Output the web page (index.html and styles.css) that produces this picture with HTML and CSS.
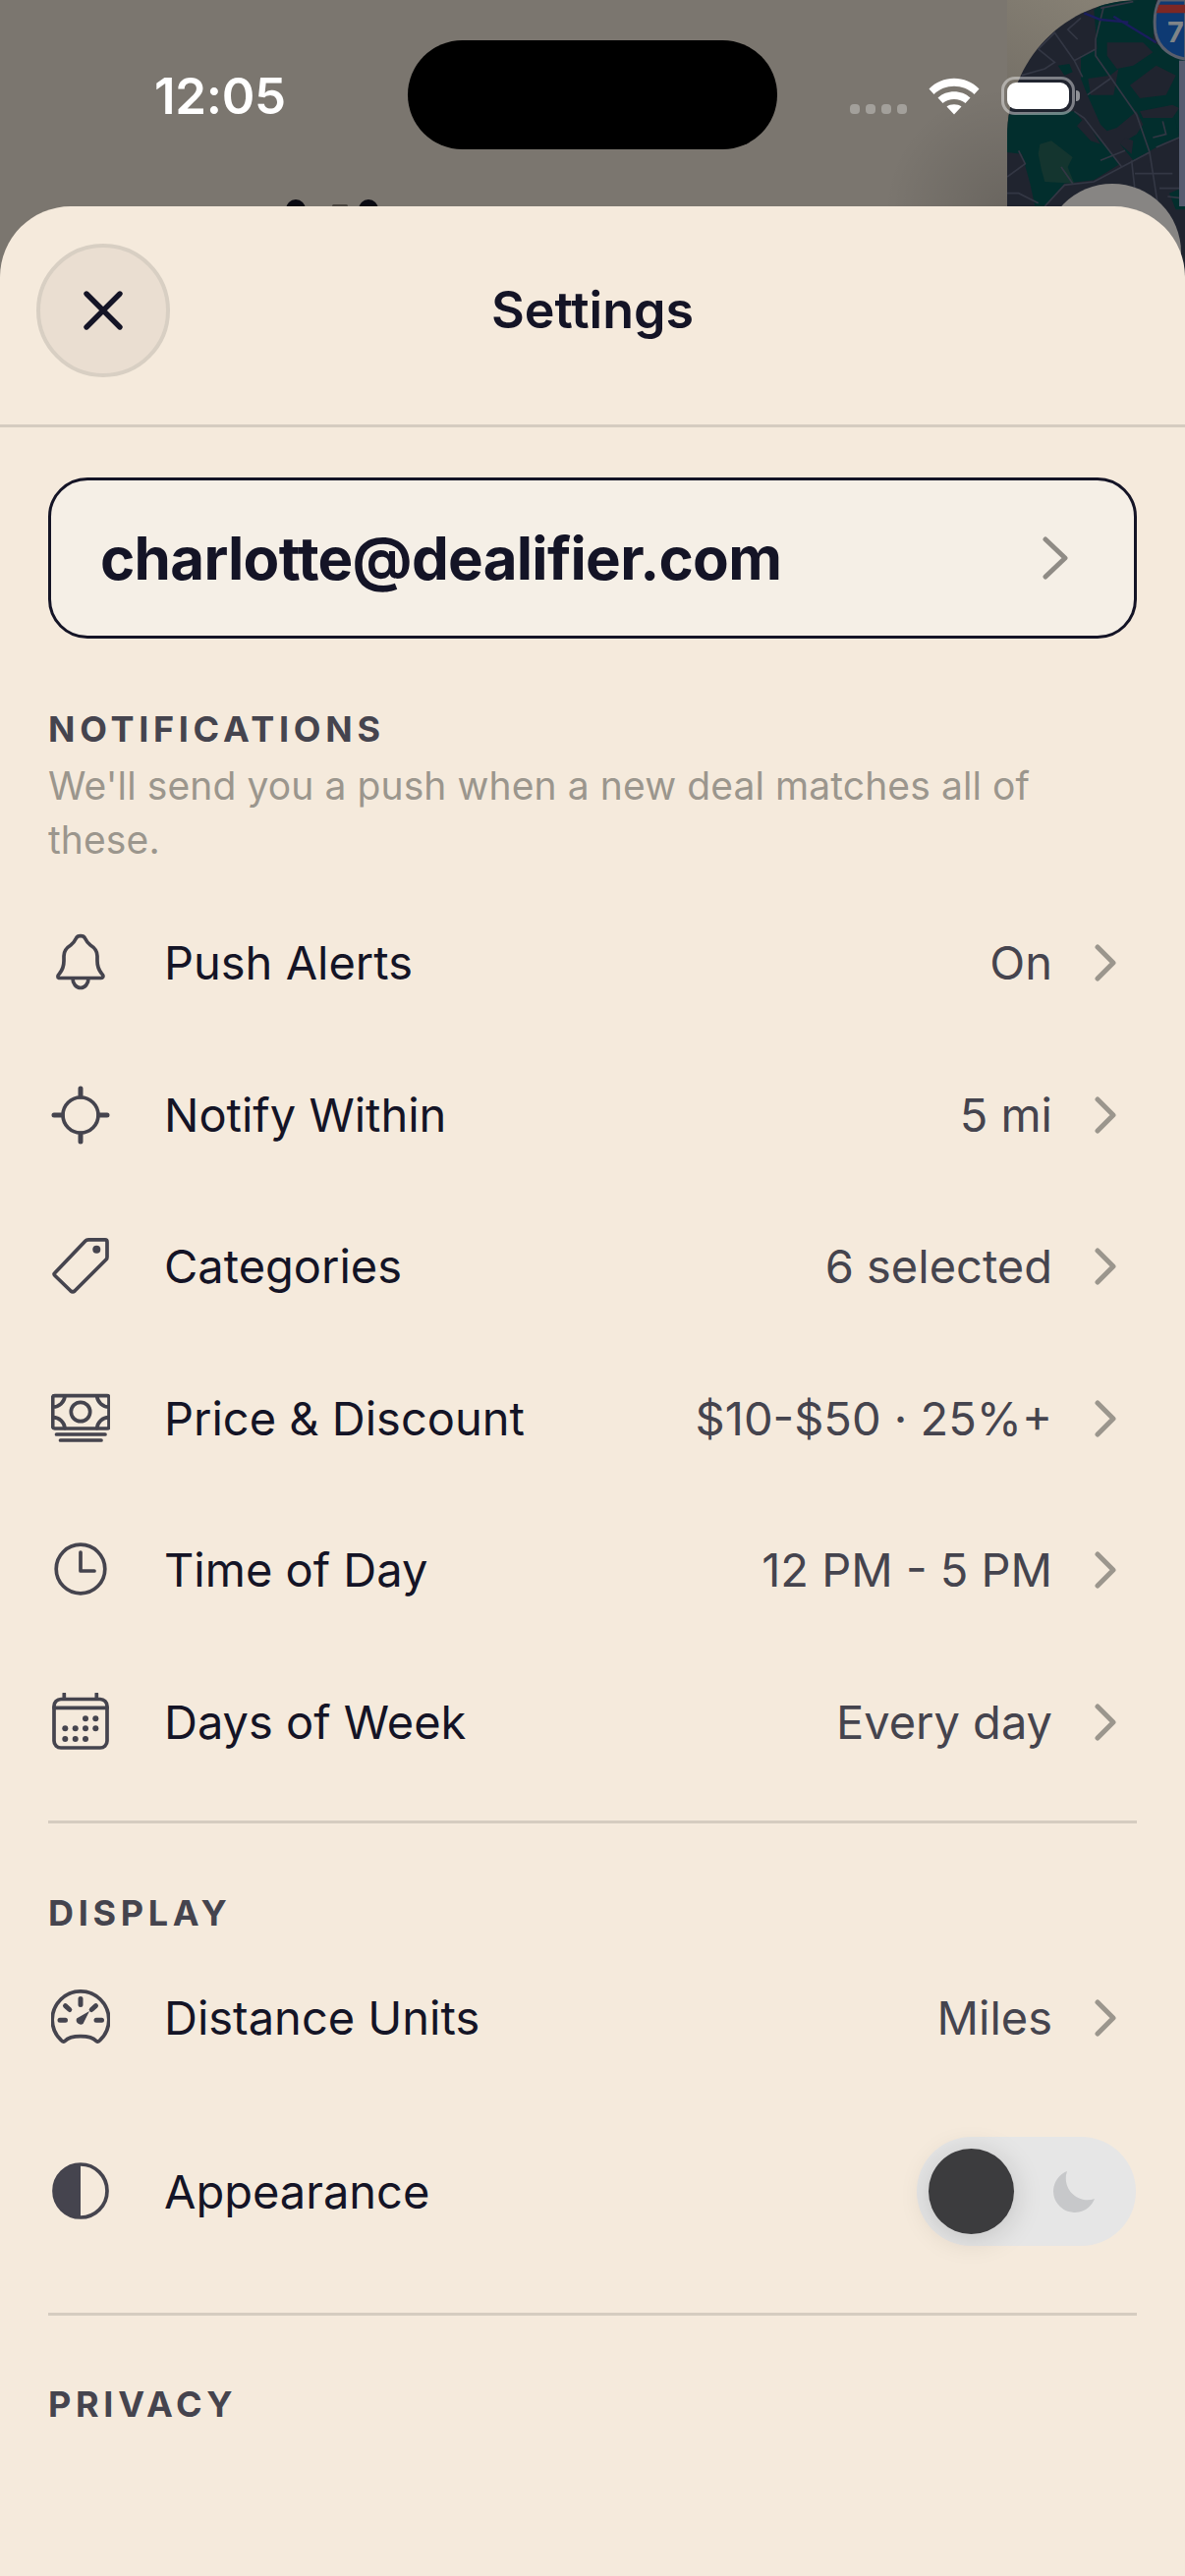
FILE: index.html
```html
<!DOCTYPE html>
<html lang="en">
<head>
<meta charset="utf-8">
<title>Settings</title>
<link rel="stylesheet" href="styles.css">
</head>
<body>
<div class="phone">
  <div class="backdrop" aria-hidden="true">
    <svg class="backdrop-art" width="1206" height="280" viewBox="0 0 1206 280">
      <defs>
        <radialGradient id="shade" gradientUnits="userSpaceOnUse" cx="1025" cy="215" r="125">
          <stop offset="0" stop-color="#000" stop-opacity=".14"/>
          <stop offset="1" stop-color="#000" stop-opacity="0"/>
        </radialGradient>
        <linearGradient id="corner" gradientUnits="userSpaceOnUse" x1="1110" y1="0" x2="1025" y2="150">
          <stop offset="0" stop-color="#868074"/>
          <stop offset="1" stop-color="#6f6a62"/>
        </linearGradient>
        <clipPath id="mapclip"><path d="M1025 280 V140 C1025 60 1085 0 1160 0 H1206 V280Z"/></clipPath>
      </defs>
      <rect x="900" y="90" width="125" height="125" fill="url(#shade)"/>
      <rect x="1025" y="0" width="140" height="150" fill="url(#corner)"/>
      <circle cx="301" cy="213" r="10" fill="#0a0a12"/>
      <circle cx="375" cy="213" r="10" fill="#0a0a12"/>
      <rect x="338" y="208" width="16" height="3" rx="1.5" fill="#4a4640"/>
      <g clip-path="url(#mapclip)">
        <rect x="1025" y="0" width="181" height="280" fill="#20242f"/>
        <g transform="translate(1020 0) scale(.33333)">
          <g fill="#022e2d">
            <path d="M15 350 L220 340 L300 430 L360 500 L280 550 L190 560 L130 630 L100 630 L85 560 L60 470 L15 465Z"/>
            <path d="M240 170 L290 150 L280 30 L310 10 L400 0 L470 0 L460 130 L558 170 V400 L470 450 L400 490 L360 440 L410 410 L430 380 L410 340 L350 390 L320 400 L300 380 L260 290 L240 240Z"/>
            <path d="M170 200 L205 195 L215 220 L190 230Z"/>
            <path d="M480 360 L525 350 L540 420 L480 440Z"/>
            <path d="M510 590 L558 570 V640 L530 640Z"/>
          </g>
          <g fill="#20242f">
            <path d="M390 260 L470 200 L530 230 L500 290 L420 300Z"/>
            <path d="M320 130 L430 130 L460 160 L400 200 L350 210 L320 170Z"/>
            <path d="M420 340 L520 320 L540 330 L520 360 L430 360Z"/>
            <path d="M262 240 L330 230 L355 210 L340 290 L270 290Z"/>
            <path d="M228 385 L250 360 L300 440 L270 430Z"/>
            <path d="M360 440 L375 420 L400 430 L395 470Z"/>
          </g>
          <path d="M115 440 L150 430 L215 480 L200 510 L220 560 L130 555 L120 520 L110 470Z" fill="#14352f"/>
          <g fill="none" stroke="#333744" stroke-width="5">
            <path d="M310 20 L285 120 L285 170 L330 235 L410 350 L450 465 L475 625"/>
            <path d="M450 465 L365 510 L280 555 L190 565 L130 630"/>
            <path d="M220 340 L250 360 L365 510 M260 290 L330 240 M395 490 L410 625 M405 530 L520 530 M470 450 L540 420"/>
            <path d="M285 150 L220 185 L160 100 L110 150 L160 190 L130 210 L60 230 M220 185 L245 235 M240 55 L200 90 L230 120"/>
            <path d="M15 540 L70 500 L50 460 M15 590 L50 590 L110 620 M490 370 L500 410 L460 420 M505 600 L545 605 M480 575 L545 575 M300 490 L375 460 M180 510 L215 560"/>
            <path d="M300 25 L400 5"/>
          </g>
          <path d="M250 40 L300 60 L385 68 M340 50 L470 130" fill="none" stroke="#1a1d5e" stroke-width="7"/>
          <rect x="540" y="185" width="18" height="445" fill="#565c70"/>
          <path d="M480 0 C465 30 462 60 468 100 C478 150 520 175 560 180 V0Z" fill="#0e3a73" stroke="#5a5f6c" stroke-width="9"/>
          <path d="M478 14 H558 V40 H470Z" fill="#7d2724"/>
        </g>
        <text class="shield-num" x="1188" y="43">7</text>
        <circle cx="1132" cy="257" r="70" fill="#878583"/>
      </g>
    </svg>
  </div>

  <header class="status-bar">
    <span class="clock">12:05</span>
    <span class="island"></span>
    <div class="status-right">
      <span class="signal"><i></i><i></i><i></i><i></i></span>
      <svg class="wifi" width="52" height="38" viewBox="0 0 52 38">
        <path d="M0.5 11.5 C14 -3 38 -3 51.5 11.5 L46.5 17 C35.5 6 16.5 6 5.5 17Z M9.5 20.5 C18 12 34 12 42.5 20.5 L37.5 26 C31 20.5 21 20.5 14.5 26Z M18.5 29.5 C22 26.5 30 26.5 33.5 29.5 L26 37.5Z" fill="#fff"/>
      </svg>
      <span class="battery"><span class="battery-fill"></span></span>
    </div>
  </header>

  <main class="sheet">
    <div class="sheet-head">
      <button class="close" type="button" aria-label="Close">
        <svg width="44" height="44" viewBox="0 0 44 44"><path d="M5 5 L39 39 M39 5 L5 39" fill="none" stroke="#141426" stroke-width="5.4" stroke-linecap="round"/></svg>
      </button>
      <h1 class="title">Settings</h1>
    </div>

    <div class="content">
      <a class="account">
        <span class="account-email">charlotte@dealifier.com</span>
        <svg class="chev-account" width="26" height="44" viewBox="0 0 26 44"><path d="M3 3 L23 22 L3 41" fill="none" stroke="#8f8b85" stroke-width="5" stroke-linecap="round" stroke-linejoin="round"/></svg>
      </a>

      <section class="group group-notify">
        <h2 class="label">NOTIFICATIONS</h2>
        <p class="hint">We'll send you a push when a new deal matches all of these.</p>
        <ul class="rows">
          <li class="row">
            <svg class="ico" viewBox="0 0 60 60"><path d="M8 45.5 Q5.5 44 8.5 41 C11 38 13 35 13 28 L13 23 C13 17 16 14.5 20 12 C23 10 24 8 25.5 5 C27 1.8 33 1.8 34.5 5 C36 8 37 10 40 12 C44 14.5 47 17 47 23 L47 28 C47 35 49 38 51.5 41 C54.5 44 52 45.5 51 45.5Z M22 46 A8 9.5 0 0 0 38 46"/></svg>
            <span class="name">Push Alerts</span><span class="val">On</span>
            <svg class="chev" viewBox="0 0 22 38"><path d="M3 3 L19 19 L3 35"/></svg>
          </li>
          <li class="row">
            <svg class="ico" viewBox="0 0 60 60"><circle cx="30" cy="30" r="18"/><path class="thick" d="M30 3 V11 M30 49 V57 M3 30 H11 M49 30 H57"/></svg>
            <span class="name">Notify Within</span><span class="val">5 mi</span>
            <svg class="chev" viewBox="0 0 22 38"><path d="M3 3 L19 19 L3 35"/></svg>
          </li>
          <li class="row">
            <svg class="ico" viewBox="0 0 60 60"><path d="M3.5 37 L35 4 Q36 2.8 38 2.8 H55 Q57 2.8 57 5 V20.5 Q57 22 56 23 L24 55 Q22 56.8 20 55 L4 39.5 Q2.5 38 3.5 37Z"/><circle class="dot" cx="46.3" cy="12.7" r="4"/></svg>
            <span class="name">Categories</span><span class="val">6 selected</span>
            <svg class="chev" viewBox="0 0 22 38"><path d="M3 3 L19 19 L3 35"/></svg>
          </li>
          <li class="row">
            <svg class="ico" viewBox="0 0 60 60"><rect x="1.7" y="6.7" width="57.3" height="33.3" rx="2"/><circle cx="30" cy="23" r="9.7"/><path d="M14 7 A12 12 0 0 1 2 18 M46.7 7 A12 12 0 0 0 58.7 18 M14 39.7 A12 12 0 0 0 2 28.7 M46.7 39.7 A12 12 0 0 1 58.7 28.7 M5.5 46 H55 M9.5 52 H51"/></svg>
            <span class="name">Price &amp; Discount</span><span class="val">$10-$50 · 25%+</span>
            <svg class="chev" viewBox="0 0 22 38"><path d="M3 3 L19 19 L3 35"/></svg>
          </li>
          <li class="row">
            <svg class="ico" viewBox="0 0 60 60"><circle cx="30" cy="29" r="24.8"/><path d="M30 12 V31 H44"/></svg>
            <span class="name">Time of Day</span><span class="val">12 PM - 5 PM</span>
            <svg class="chev" viewBox="0 0 22 38"><path d="M3 3 L19 19 L3 35"/></svg>
          </li>
          <li class="row">
            <svg class="ico" viewBox="0 0 60 60"><rect x="3" y="6.5" width="54" height="49.5" rx="7"/><path d="M3 15.3 H57 M13.3 1 V6 M46.3 1 V6"/><g class="dots"><circle cx="35" cy="26.3" r="3"/><circle cx="45.3" cy="26.3" r="3"/><circle cx="14.3" cy="36.3" r="3"/><circle cx="24.7" cy="36.3" r="3"/><circle cx="35" cy="36.3" r="3"/><circle cx="45.3" cy="36.3" r="3"/><circle cx="14.3" cy="47" r="3"/><circle cx="24.7" cy="47" r="3"/><circle cx="35" cy="47" r="3"/></g></svg>
            <span class="name">Days of Week</span><span class="val">Every day</span>
            <svg class="chev" viewBox="0 0 22 38"><path d="M3 3 L19 19 L3 35"/></svg>
          </li>
        </ul>
      </section>

      <section class="group group-display">
        <h2 class="label">DISPLAY</h2>
        <ul class="rows">
          <li class="row">
            <svg class="ico" viewBox="0 0 60 60"><path d="M10 52.4 A28.8 28.8 0 1 1 50 52.4 Q48 55 46 53.5 C40 47 20 47 14 53.5 Q12 55 10 52.4Z"/><path class="thick" d="M30 10.5 V16.5 M9 32.3 H14.5 M46 32.3 H51.5 M14.5 17.7 L18.8 21.5 M45.5 17.7 L41.2 21.5"/><path class="dot" d="M26 30.5 L39 23 L32.5 36 A4.5 4.5 0 0 1 26 30.5Z"/></svg>
            <span class="name">Distance Units</span><span class="val">Miles</span>
            <svg class="chev" viewBox="0 0 22 38"><path d="M3 3 L19 19 L3 35"/></svg>
          </li>
          <li class="row row-toggle">
            <svg class="ico" viewBox="0 0 60 60"><circle cx="30" cy="29" r="27"/><path class="dot" d="M30 2 A27 27 0 0 0 30 56Z"/></svg>
            <span class="name">Appearance</span>
            <span class="toggle">
              <span class="knob"></span>
              <svg class="moon" width="48" height="48" viewBox="0 0 48 48"><path d="M17 3 A21.7 21.7 0 1 0 45 31 A 22 22 0 0 1 17 3Z"/></svg>
            </span>
          </li>
        </ul>
      </section>

      <section class="group group-privacy">
        <h2 class="label">PRIVACY</h2>
      </section>
    </div>
  </main>
</div>
</body>
</html>
```
FILE: styles.css
```css
* { box-sizing: border-box; }
html, body { margin: 0; padding: 0; }
body { width: 1206px; height: 2622px; overflow: hidden; font-family: Inter, "Liberation Sans", sans-serif; }
.phone { position: relative; width: 1206px; height: 2622px; background: #7b766f; overflow: hidden; display: flex; flex-direction: column; }
.backdrop { position: absolute; inset: 0; }
.backdrop-art { display: block; }
.shield-num { font: 700 29px Inter, sans-serif; fill: #7f8488; }

.status-bar { position: relative; height: 210px; flex: none; }
.clock { position: absolute; left: 157px; top: 68px; font-size: 51px; font-weight: 600; line-height: 60px; letter-spacing: -0.3px; color: #fff; }
.island { position: absolute; left: 415px; top: 41px; width: 376px; height: 111px; border-radius: 56px; background: #000; }
.status-right { position: absolute; left: 865px; top: 78px; display: flex; align-items: flex-end; height: 39px; }
.signal { display: flex; gap: 6px; margin-bottom: 1px; margin-right: 22px; }
.signal i { width: 10px; height: 10px; border-radius: 4px; background: #a3a09b; }
.wifi { display: block; margin-right: 22px; }
.battery { position: relative; width: 75px; height: 39px; border: 3px solid rgba(255,255,255,.42); border-radius: 14px; padding: 3px; display: block; }
.battery::after { content: ""; position: absolute; right: -8px; top: 11px; width: 4px; height: 11px; border-radius: 0 4px 4px 0; background: rgba(255,255,255,.5); }
.battery-fill { display: block; width: 100%; height: 100%; background: #fff; border-radius: 9px; }

.sheet { position: relative; flex: 1; background: #f5eadc; border-radius: 72px 72px 0 0; }
.sheet-head { position: relative; height: 225px; border-bottom: 3px solid #d5ccc0; display: flex; align-items: center; justify-content: center; }
.close { position: absolute; left: 37px; top: 38px; width: 136px; height: 136px; padding: 0; border-radius: 50%; background: #eaded1; border: 4px solid #d8cfc3; display: flex; align-items: center; justify-content: center; }
.title { margin: 0 0 11px; font-size: 52px; font-weight: 600; line-height: 60px; color: #141426; }

.content { padding: 51px 49px 0; }
.account { display: flex; align-items: center; justify-content: space-between; height: 164px; padding: 0 67px 0 50px; background: #f5efe6; border: 3px solid #141426; border-radius: 40px; }
.account-email { font-size: 60px; font-weight: 700; line-height: 70px; letter-spacing: -0.7px; color: #141426; }

.group-notify { padding-top: 70px; }
.group-display { margin-top: 23px; border-top: 3px solid #d5ccc0; padding-top: 69px; }
.group-privacy { margin-top: 24px; border-top: 3px solid #d5ccc0; padding-top: 68px; }
.label { margin: 0; font-size: 36px; font-weight: 700; line-height: 44px; letter-spacing: 4.7px; color: #45444e; }
.hint { margin: 8px 0 0; max-width: 1040px; font-size: 39px; line-height: 55px; letter-spacing: 0.1px; color: #9b968d; }
.rows { list-style: none; margin: 0; padding: 0; }
.group-notify .rows { margin-top: 21px; }
.group-display .rows { margin-top: 8px; }
.row { display: flex; align-items: center; height: 154.5px; }
.row-toggle { height: 198px; }
.ico { width: 60px; height: 60px; flex: none; margin: 0 55px 0 3px; fill: none; stroke: #45444e; stroke-width: 3.7; stroke-linecap: round; stroke-linejoin: round; }
.ico .thick { stroke-width: 5; }
.ico .dot, .ico .dots { fill: #45444e; stroke: none; }
.name { flex: 1; font-size: 47px; line-height: 60px; color: #141426; }
.val { font-size: 47px; line-height: 60px; color: #45444e; }
.chev { width: 22px; height: 38px; flex: none; margin: 0 21px 0 43px; fill: none; stroke: #9b968d; stroke-width: 5; stroke-linecap: round; stroke-linejoin: round; }
.toggle { position: relative; display: flex; align-items: center; justify-content: flex-end; width: 223px; height: 111px; margin-right: 1px; padding-right: 39px; border-radius: 56px; background: #e6e6e6; }
.knob { position: absolute; left: 12px; top: 12px; width: 87px; height: 87px; border-radius: 50%; background: #3c3c3e; box-shadow: 0 4px 30px rgba(0,0,0,.16); }
.moon { display: block; fill: #c7c8ca; }
```
